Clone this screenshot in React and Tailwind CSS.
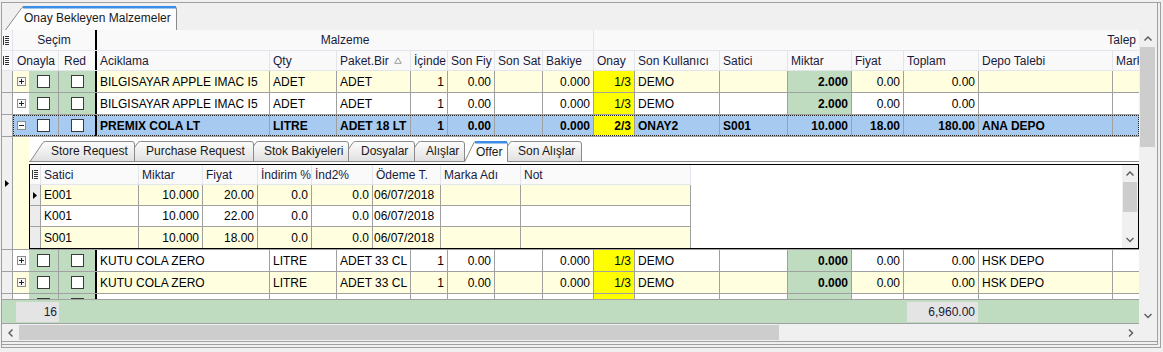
import React from 'react';

const G = 'border-[#a0a0a0]';
const HB = 'border-[#e2e6ec]';

function ListIcon() {
  return (
    <svg width="6" height="9" viewBox="0 0 6 9" className="shrink-0">
      <rect x="0" y="0" width="1" height="9" fill="#333" />
      {[0, 2, 4, 6, 8].map((y) => (
        <rect key={y} x="2" y={y} width="4" height="1" fill="#333" />
      ))}
    </svg>
  );
}

function ExpandIcon({ minus }) {
  return (
    <svg width="9" height="9" viewBox="0 0 9 9">
      <rect x="0.5" y="0.5" width="8" height="8" fill="#f7f7f7" stroke="#8c8c8c" />
      <path d="M2 4.5H7" stroke="#222" />
      {!minus && <path d="M4.5 2V7" stroke="#222" />}
    </svg>
  );
}

function Tri() {
  return (
    <svg width="4" height="7" viewBox="0 0 4 7">
      <polygon points="0,0 4,3.5 0,7" fill="#000" />
    </svg>
  );
}

function Chev({ dir }) {
  if (dir === 'up' || dir === 'down') {
    const pts = dir === 'up' ? '0.5,4.5 4,1 7.5,4.5' : '0.5,1 4,4.5 7.5,1';
    return (
      <svg width="8" height="6" viewBox="0 0 8 6">
        <polyline points={pts} fill="none" stroke="#606060" strokeWidth="1.5" />
      </svg>
    );
  }
  const pts = dir === 'left' ? '4.5,0.5 1,4 4.5,7.5' : '1,0.5 4.5,4 1,7.5';
  return (
    <svg width="6" height="8" viewBox="0 0 6 8">
      <polyline points={pts} fill="none" stroke="#606060" strokeWidth="1.5" />
    </svg>
  );
}

function Checkbox() {
  return <div className="w-[13px] h-[13px] border border-[#3a3a3a] bg-white shrink-0" />;
}

function Tab({ label, w, h, s, cls, active, id }) {
  const d = `M0.5 ${h} L${s} 1.5 Q${s + 0.7} 0.5 ${s + 2.5} 0.5 L${w - 3} 0.5 Q${w - 0.5} 0.5 ${w - 0.5} 3 L${w - 0.5} ${h}`;
  return (
    <div className={`relative shrink-0 flex items-center ${cls}`}>
      <svg className="absolute left-0 top-0" width={w} height={h} viewBox={`0 0 ${w} ${h}`}>
        <defs>
          <linearGradient id={id} x1="0" y1="0" x2="0" y2="1">
            <stop offset="0" stopColor={active ? '#ffffff' : '#fdfdfd'} />
            <stop offset="1" stopColor={active ? '#fbfbfb' : '#e1e1e1'} />
          </linearGradient>
        </defs>
        <path d={d + ' Z'} fill={`url(#${id})`} stroke="none" />
        <path d={d} fill="none" stroke="#8a8a8a" />
        {active && <rect x={s + 1} y="0" width={w - s - 2} height="2.5" fill="#3b8de6" />}
      </svg>
      <span className="relative whitespace-nowrap text-[#1a1a1a]">{label}</span>
    </div>
  );
}

const COLS = [
  { h: 'Aciklama', w: 'w-[173px]', a: 'l' },
  { h: 'Qty', w: 'w-[67px]', a: 'l' },
  { h: 'Paket.Bir', w: 'w-[74px]', a: 'l', sort: true },
  { h: 'İçinde', w: 'w-[37px]', a: 'r' },
  { h: 'Son Fiy', w: 'w-[47px]', a: 'r' },
  { h: 'Son Sat', w: 'w-[48px]', a: 'r' },
  { h: 'Bakiye', w: 'w-[51px]', a: 'r' },
  { h: 'Onay', w: 'w-[41px]', a: 'r', onay: true },
  { h: 'Son Kullanıcı', w: 'w-[85px]', a: 'l' },
  { h: 'Satici', w: 'w-[68px]', a: 'l' },
  { h: 'Miktar', w: 'w-[64px]', a: 'r', mik: true },
  { h: 'Fiyat', w: 'w-[52px]', a: 'r' },
  { h: 'Toplam', w: 'w-[75px]', a: 'r' },
  { h: 'Depo Talebi', w: 'w-[134px]', a: 'l' },
  { h: 'Marka', w: 'w-[80px]', a: 'l' },
];

const ROWS_TOP = [
  { bg: 'y', d: ['BILGISAYAR APPLE IMAC I5', 'ADET', 'ADET', '1', '0.00', '', '0.000', '1/3', 'DEMO', '', '2.000', '0.00', '0.00', '', ''] },
  { bg: 'w', d: ['BILGISAYAR APPLE IMAC I5', 'ADET', 'ADET', '1', '0.00', '', '0.000', '1/3', 'DEMO', '', '2.000', '0.00', '0.00', '', ''] },
  { bg: 's', d: ['PREMIX COLA LT', 'LITRE', 'ADET 18 LT', '1', '0.00', '', '0.000', '2/3', 'ONAY2', 'S001', '10.000', '18.00', '180.00', 'ANA DEPO', ''] },
];

const ROWS_BOTTOM = [
  { bg: 'w', d: ['KUTU COLA ZERO', 'LITRE', 'ADET 33 CL', '1', '0.00', '', '0.000', '1/3', 'DEMO', '', '0.000', '0.00', '0.00', 'HSK DEPO', ''] },
  { bg: 'y', d: ['KUTU COLA ZERO', 'LITRE', 'ADET 33 CL', '1', '0.00', '', '0.000', '1/3', 'DEMO', '', '0.000', '0.00', '0.00', 'HSK DEPO', ''] },
];

function DataRow({ r, noIcon }) {
  const sel = r.bg === 's';
  const base = sel ? 'bg-[#a6caf0]' : r.bg === 'y' ? 'bg-[#ffffe0]' : 'bg-white';
  const green = sel ? 'bg-[#a6caf0]' : 'bg-[#c0dcc0]';
  return (
    <div className={`relative flex h-[22px] shrink-0 border-b ${G} ${sel ? 'font-bold' : ''}`}>
      <div className={`w-[11px] shrink-0 border-r ${G} bg-[#f0f0f0]`} />
      <div className={`w-[16px] shrink-0 flex items-center justify-center ${base}`}>
        {!noIcon && <ExpandIcon minus={sel} />}
      </div>
      <div className={`w-[30px] shrink-0 border-r ${G} ${green} flex items-center justify-center`}>
        <Checkbox />
      </div>
      <div className={`w-[38px] shrink-0 border-r-2 border-black ${green} flex items-center justify-center`}>
        <Checkbox />
      </div>
      {COLS.map((c, i) => {
        const bg = c.onay ? 'bg-[#ffff00]' : c.mik ? green : base;
        return (
          <div
            key={i}
            className={`${c.w} shrink-0 border-r ${G} ${bg} flex items-center overflow-hidden whitespace-nowrap ${
              c.a === 'r' ? 'justify-end pr-[3px]' : 'pl-[3px]'
            } ${c.mik ? 'font-bold' : ''}`}
          >
            {r.d[i]}
          </div>
        );
      })}
      {sel && (
        <div className="absolute left-[11px] right-0 top-0 bottom-0 border border-dotted border-[#222] pointer-events-none" />
      )}
    </div>
  );
}

const ICOLS = [
  { h: 'Satici', w: 'w-[98px]', a: 'l' },
  { h: 'Miktar', w: 'w-[64px]', a: 'r' },
  { h: 'Fiyat', w: 'w-[55px]', a: 'r' },
  { h: 'İndirim %', w: 'w-[54px]', a: 'r' },
  { h: 'İnd2%', w: 'w-[61px]', a: 'r' },
  { h: 'Ödeme T.', w: 'w-[68px]', a: 'l' },
  { h: 'Marka Adı', w: 'w-[80px]', a: 'l' },
  { h: 'Not', w: 'w-[170px]', a: 'l' },
];

const IROWS = [
  ['E001', '10.000', '20.00', '0.0', '0.0', '06/07/2018', '', ''],
  ['K001', '10.000', '22.00', '0.0', '0.0', '06/07/2018', '', ''],
  ['S001', '10.000', '18.00', '0.0', '0.0', '06/07/2018', '', ''],
];

function Detail() {
  return (
    <div className={`flex h-[113px] shrink-0 border-b ${G}`}>
      <div className={`w-[11px] shrink-0 border-r ${G} bg-[#f0f0f0] pt-[43px] pl-[3px]`}>
        <Tri />
      </div>
      <div className="w-[16px] shrink-0 bg-[#ffffe0]" />
      <div className="w-[1110px] shrink-0 flex flex-col bg-white">
        <div className="flex items-end h-[25px] shrink-0 border-b border-[#8a8a8a] pl-[1px]">
          <Tab id="t1" label="Store Request" w={105} h={20} s={13} cls="w-[105px] h-[20px] pl-[21px] z-[7]" />
          <Tab id="t2" label="Purchase Request" w={129} h={20} s={13} cls="w-[129px] h-[20px] -ml-[10px] pl-[21px] z-[6]" />
          <Tab id="t3" label="Stok Bakiyeleri" w={106} h={20} s={13} cls="w-[106px] h-[20px] -ml-[11px] pl-[21px] z-[5]" />
          <Tab id="t4" label="Dosyalar" w={75} h={20} s={13} cls="w-[75px] h-[20px] -ml-[9px] pl-[21px] z-[4]" />
          <Tab id="t5" label="Alışlar" w={60} h={20} s={13} cls="w-[60px] h-[20px] -ml-[10px] pl-[21px] z-[3]" />
          <Tab id="t6" label="Offer" w={44} h={21} s={10} active cls="w-[44px] h-[21px] -ml-[1px] -mb-[1px] pl-[12px] z-[10]" />
          <Tab id="t7" label="Son Alışlar" w={85} h={20} s={13} cls="w-[85px] h-[20px] -ml-[11px] pl-[21px] z-[1]" />
        </div>
        <div className="h-[2px] shrink-0" />
        <div className="flex h-[85px] shrink-0 border border-black">
          <div className="flex flex-col w-[661px] shrink-0">
            <div className={`flex h-[20px] shrink-0 bg-[#fafafa] border-b ${HB} text-[#1a1a3a]`}>
              <div className={`w-[11px] shrink-0 border-r ${HB} flex items-center pl-[2px]`}>
                <ListIcon />
              </div>
              {ICOLS.map((c, i) => (
                <div key={i} className={`${c.w} shrink-0 border-r ${HB} flex items-center pl-[3px] whitespace-nowrap overflow-hidden`}>
                  {c.h}
                </div>
              ))}
            </div>
            {IROWS.map((r, ri) => (
              <div
                key={ri}
                className={`flex h-[21px] shrink-0 ${ri < 2 ? `border-b ${G}` : ''} ${ri % 2 === 0 ? 'bg-[#ffffe0]' : 'bg-white'}`}
              >
                <div className={`w-[11px] shrink-0 border-r ${G} bg-[#ececec] flex items-center pl-[3px]`}>
                  {ri === 0 && <Tri />}
                </div>
                {ICOLS.map((c, i) => (
                  <div
                    key={i}
                    className={`${c.w} shrink-0 border-r ${G} flex items-center whitespace-nowrap overflow-hidden ${
                      c.a === 'r' ? 'justify-end pr-[3px]' : i === 5 ? 'pl-[1px]' : 'pl-[3px]'
                    }`}
                  >
                    {r[i]}
                  </div>
                ))}
              </div>
            ))}
          </div>
          <div className="flex-1 bg-white" />
          <div className="w-[16px] shrink-0 bg-[#f0f0f0] flex flex-col">
            <div className="h-[17px] shrink-0 flex items-center justify-center">
              <Chev dir="up" />
            </div>
            <div className="h-[30px] shrink-0 mx-[1px] bg-[#cdcdcd]" />
            <div className="flex-1" />
            <div className="h-[17px] shrink-0 flex items-center justify-center">
              <Chev dir="down" />
            </div>
          </div>
        </div>
      </div>
    </div>
  );
}

export default function App() {
  return (
    <div className="w-[1163px] h-[352px] bg-[#f0f0f0] overflow-hidden font-['Liberation_Sans',Arial,sans-serif] text-[12px] leading-none text-black">
      <div className="ml-[1px] mt-[2px] w-[1160px] h-[346px] border border-[#a0a0a0] flex flex-col">
        <div className="w-[1156px] h-[342px] border-r border-b border-[#a0a0a0] flex flex-col">
          {/* main tab header */}
          <div className="h-[27px] shrink-0 flex items-end">
            <Tab id="tm" label="Onay Bekleyen Malzemeler" w={172} h={24} s={17} active cls="w-[172px] h-[24px] ml-[3px] pl-[19px] z-[1]" />
          </div>
          {/* grid */}
          <div className={`w-[1155px] h-[312px] shrink-0 flex flex-col border-b ${G}`}>
            <div className="flex h-[294px] shrink-0">
              <div className="w-[1137px] shrink-0 overflow-hidden flex flex-col bg-white">
                {/* band row */}
                <div className={`flex h-[21px] shrink-0 bg-[#f9f9f9] border-b ${HB} text-[#1a1a3a]`}>
                  <div className={`w-[11px] shrink-0 border-r ${HB} flex items-center pl-[1px]`}>
                    <ListIcon />
                  </div>
                  <div className="w-[84px] shrink-0 border-r-2 border-black flex items-center justify-center">Seçim</div>
                  <div className={`w-[497px] shrink-0 border-r ${HB} flex items-center justify-center`}>Malzeme</div>
                  <div className="w-[545px] shrink-0 flex items-center justify-end pr-[3px]">Talep</div>
                </div>
                {/* header row */}
                <div className={`flex h-[20px] shrink-0 bg-[#f9f9f9] border-b ${HB} text-[#1a1a3a]`}>
                  <div className={`w-[11px] shrink-0 border-r ${HB} flex items-center pl-[1px]`}>
                    <ListIcon />
                  </div>
                  <div className={`w-[46px] shrink-0 border-r ${HB} flex items-center pl-[4px]`}>Onayla</div>
                  <div className="w-[38px] shrink-0 border-r-2 border-black flex items-center pl-[5px]">Red</div>
                  {COLS.map((c, i) => (
                    <div key={i} className={`${c.w} shrink-0 border-r ${HB} flex items-center pl-[3px] whitespace-nowrap overflow-hidden`}>
                      <span>{c.h}</span>
                      {c.sort && (
                        <svg className="ml-auto mr-[8px] shrink-0" width="8" height="7" viewBox="0 0 8 7">
                          <polygon points="4,0.8 7.3,6.3 0.7,6.3" fill="none" stroke="#9a9a9a" />
                        </svg>
                      )}
                    </div>
                  ))}
                </div>
                {ROWS_TOP.map((r, i) => (
                  <DataRow key={i} r={r} />
                ))}
                <Detail />
                {ROWS_BOTTOM.map((r, i) => (
                  <DataRow key={i} r={r} />
                ))}
                <div className="h-[5px] shrink-0 overflow-hidden">
                  <DataRow r={{ bg: 'w', d: ['', '', '', '', '', '', '', '', '', '', '', '', '', '', ''] }} noIcon />
                </div>
                {/* footer */}
                <div className={`h-[25px] shrink-0 border-t border-b ${G} bg-[#c0dcc0] flex items-center text-[#1a1a3a]`}>
                  <div className="ml-[14px] w-[43px] h-[20px] shrink-0 bg-[#e4e4e4] flex items-center justify-end pr-[2px]">16</div>
                  <div className="ml-[848px] w-[71px] h-[20px] shrink-0 bg-[#e4e4e4] flex items-center justify-end pr-[3px]">6,960.00</div>
                </div>
              </div>
              {/* vertical scrollbar */}
              <div className="w-[17px] shrink-0 bg-[#f0f0f0] flex flex-col">
                <div className="h-[17px] shrink-0 flex items-center justify-center">
                  <Chev dir="up" />
                </div>
                <div className="h-[100px] shrink-0 mx-[1px] bg-[#cdcdcd]" />
                <div className="flex-1" />
                <div className="h-[17px] shrink-0 flex items-center justify-center">
                  <Chev dir="down" />
                </div>
              </div>
            </div>
            {/* horizontal scrollbar */}
            <div className="flex h-[17px] shrink-0">
              <div className="w-[1137px] shrink-0 bg-[#f0f0f0] flex">
                <div className="w-[17px] shrink-0 flex items-center justify-center">
                  <Chev dir="left" />
                </div>
                <div className="w-[760px] shrink-0 my-[1px] bg-[#cdcdcd]" />
                <div className="flex-1" />
                <div className="w-[17px] shrink-0 flex items-center justify-center">
                  <Chev dir="right" />
                </div>
              </div>
              <div className="w-[18px] shrink-0 bg-[#f0f0f0]" />
            </div>
          </div>
        </div>
      </div>
    </div>
  );
}
